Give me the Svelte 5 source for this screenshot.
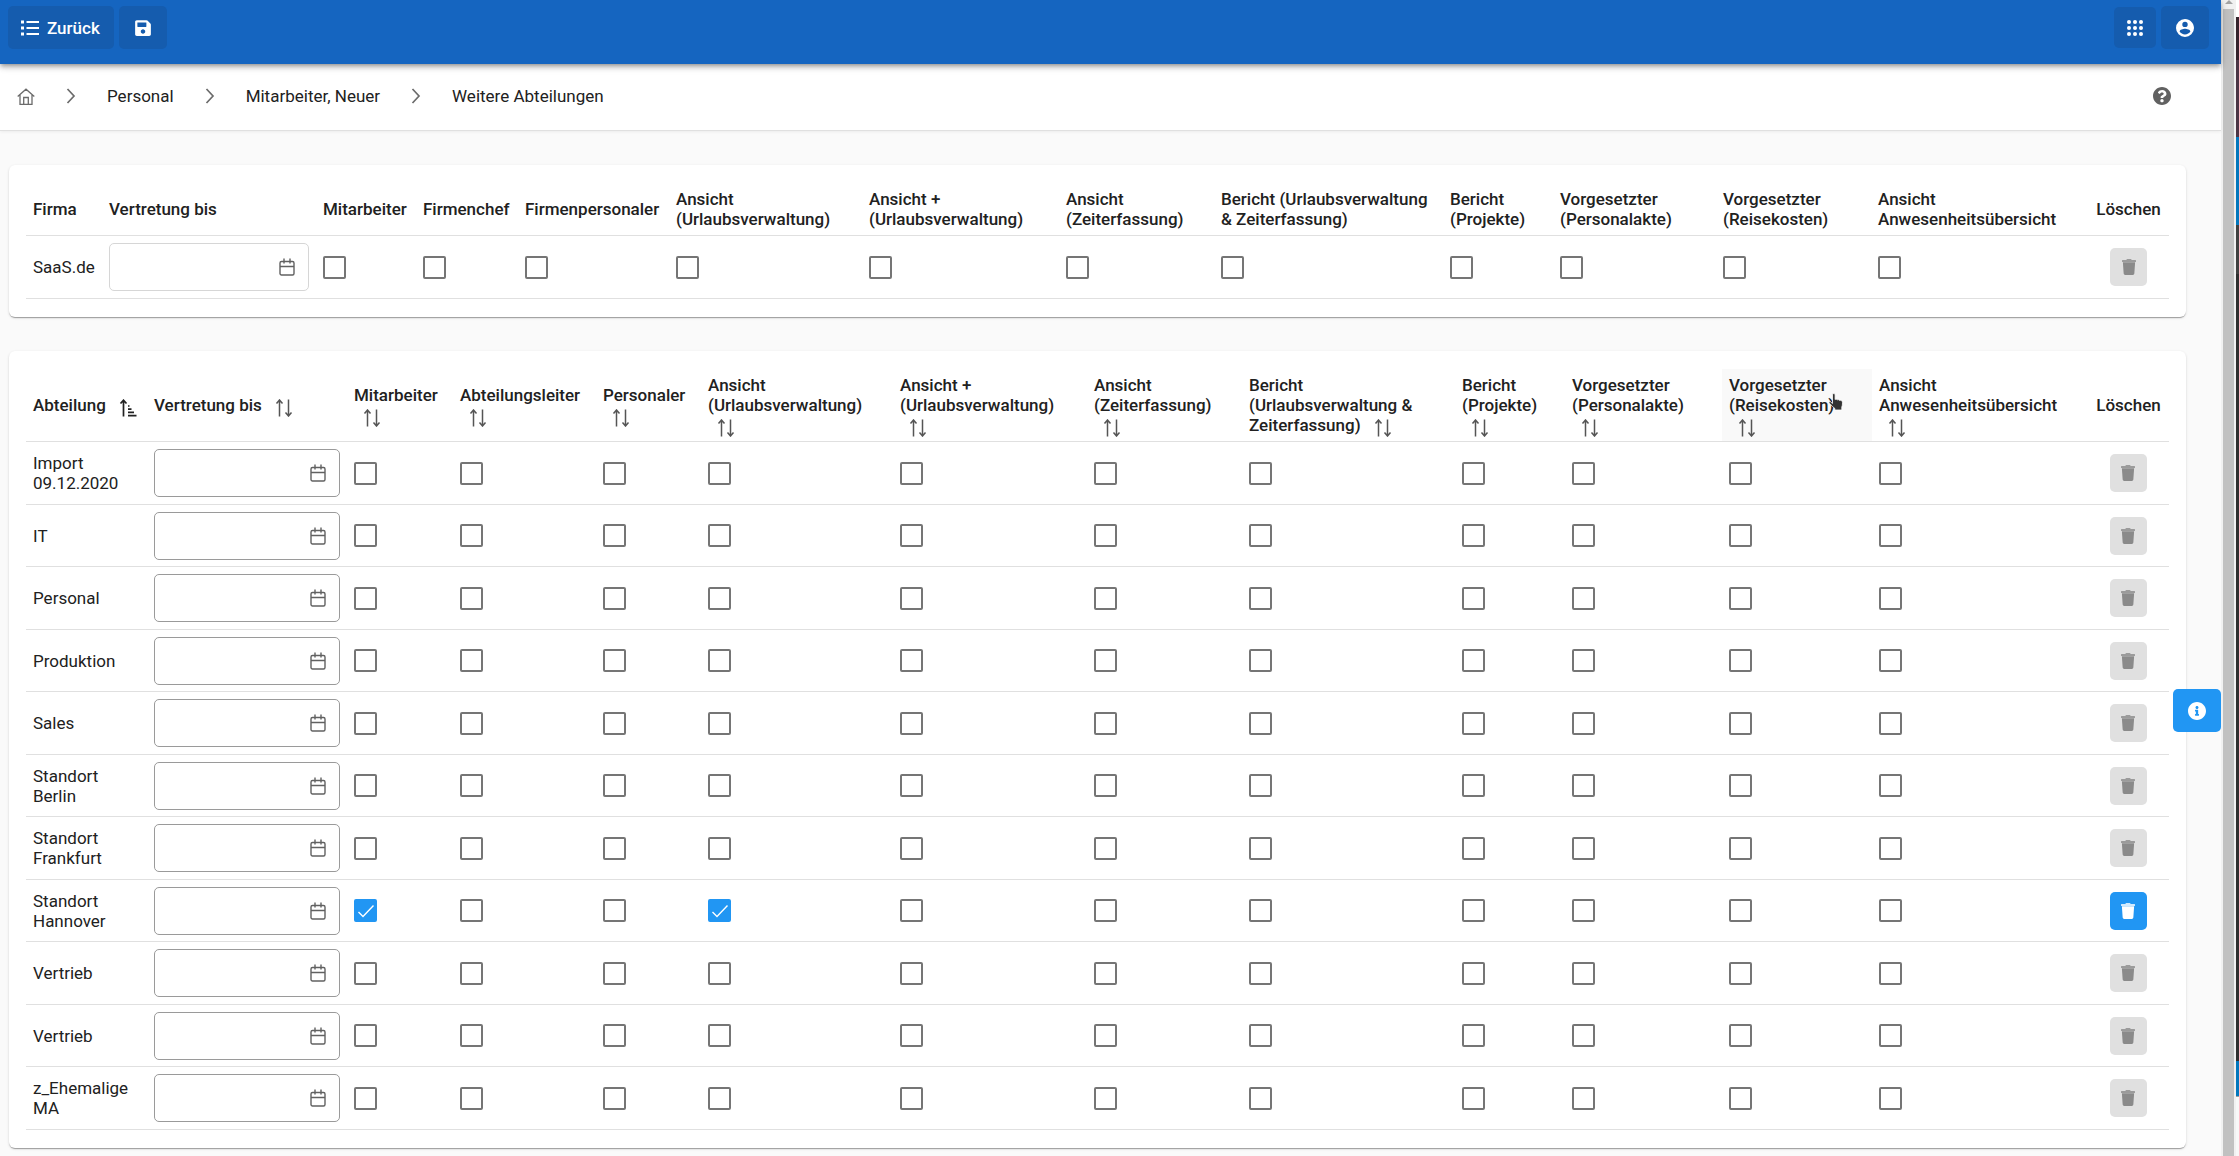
<script lang="ts">
	type Column = {
		label: string;
		width: number;
		kind: 'name' | 'date' | 'check' | 'delete';
		hovered?: boolean;
	};

	type Row = {
		name: string;
		checked: number[];
	};

	const companyColumns: Column[] = [
		{ label: 'Firma', width: 76, kind: 'name' },
		{ label: 'Vertretung bis', width: 214, kind: 'date' },
		{ label: 'Mitarbeiter', width: 100, kind: 'check' },
		{ label: 'Firmenchef', width: 102, kind: 'check' },
		{ label: 'Firmenpersonaler', width: 151, kind: 'check' },
		{ label: 'Ansicht (Urlaubsverwaltung)', width: 193, kind: 'check' },
		{ label: 'Ansicht + (Urlaubsverwaltung)', width: 197, kind: 'check' },
		{ label: 'Ansicht (Zeiterfassung)', width: 155, kind: 'check' },
		{ label: 'Bericht (Urlaubsverwaltung & Zeiterfassung)', width: 229, kind: 'check' },
		{ label: 'Bericht (Projekte)', width: 110, kind: 'check' },
		{ label: 'Vorgesetzter (Personalakte)', width: 163, kind: 'check' },
		{ label: 'Vorgesetzter (Reisekosten)', width: 155, kind: 'check' },
		{ label: 'Ansicht Anwesenheitsübersicht', width: 217, kind: 'check' },
		{ label: 'Löschen', width: 81, kind: 'delete' }
	];

	const departmentColumns: Column[] = [
		{ label: 'Abteilung', width: 121, kind: 'name' },
		{ label: 'Vertretung bis', width: 200, kind: 'date' },
		{ label: 'Mitarbeiter', width: 106, kind: 'check' },
		{ label: 'Abteilungsleiter', width: 143, kind: 'check' },
		{ label: 'Personaler', width: 105, kind: 'check' },
		{ label: 'Ansicht (Urlaubsverwaltung)', width: 192, kind: 'check' },
		{ label: 'Ansicht + (Urlaubsverwaltung)', width: 194, kind: 'check' },
		{ label: 'Ansicht (Zeiterfassung)', width: 155, kind: 'check' },
		{ label: 'Bericht (Urlaubsverwaltung & Zeiterfassung)', width: 213, kind: 'check' },
		{ label: 'Bericht (Projekte)', width: 110, kind: 'check' },
		{ label: 'Vorgesetzter (Personalakte)', width: 157, kind: 'check' },
		{ label: 'Vorgesetzter (Reisekosten)', width: 150, kind: 'check', hovered: true },
		{ label: 'Ansicht Anwesenheitsübersicht', width: 216, kind: 'check' },
		{ label: 'Löschen', width: 81, kind: 'delete' }
	];

	const companies: Row[] = [{ name: 'SaaS.de', checked: [] }];

	// checked holds the column indexes that are ticked
	const departments: Row[] = [
		{ name: 'Import 09.12.2020', checked: [] },
		{ name: 'IT', checked: [] },
		{ name: 'Personal', checked: [] },
		{ name: 'Produktion', checked: [] },
		{ name: 'Sales', checked: [] },
		{ name: 'Standort Berlin', checked: [] },
		{ name: 'Standort Frankfurt', checked: [] },
		{ name: 'Standort Hannover', checked: [2, 5] },
		{ name: 'Vertrieb', checked: [] },
		{ name: 'Vertrieb', checked: [] },
		{ name: 'z_Ehemalige MA', checked: [] }
	];

	const crumbs = ['Personal', 'Mitarbeiter, Neuer', 'Weitere Abteilungen'];

	function share(columns: Column[], width: number) {
		const total = columns.reduce((sum, c) => sum + c.width, 0);
		return (width / total) * 100;
	}
</script>

{#snippet sortIcon(active: boolean)}
	{#if active}
		<svg class="sort active" viewBox="0 0 18 18" aria-hidden="true">
			<path d="M4.500 17.500V1.500M1.500 4.500L4.500 1.200L7.500 4.500M9 7h1.500M9 10.200h3.500M9 13.400h6M9 16.600h8.500" />
		</svg>
	{:else}
		<svg class="sort" viewBox="0 0 18 18" aria-hidden="true">
			<path d="M4.500 17.500V1M1.500 4.500L4.500 1L7.500 4.500M13.500 .5v16.500M10.500 13.500l3 3.500l3-3.500" />
		</svg>
	{/if}
{/snippet}

{#snippet grid(columns: Column[], rows: Row[], sortable: boolean)}
	<table>
		<colgroup>
			{#each columns as column}
				<col style:width="{share(columns, column.width)}%" />
			{/each}
		</colgroup>
		<thead>
			<tr>
				{#each columns as column, i}
					<th class={column.kind} class:hovered={column.hovered} scope="col">
						{column.label}
						{#if sortable && column.kind !== 'delete'}
							{@render sortIcon(i === 0)}
						{/if}
						{#if column.hovered}
							<svg class="pointer" viewBox="0 0 16 18" aria-hidden="true">
								<path
									d="M4.500 10.500V1.800a1.300 1.300 0 0 1 2.600 0v4.700c.6-.5 1.800-.4 2.200.3.700-.4 1.800-.2 2.200.6.900-.4 2.200 0 2.700 1 .5.900.3 4.300-.4 5.600V17H6.800v-1.500C5.500 14.500 3.500 12.200 1.200 10.200c-.7-.8.300-2 1.300-1.500z"
								/>
							</svg>
						{/if}
					</th>
				{/each}
			</tr>
		</thead>
		<tbody>
			{#each rows as row}
				<tr>
					{#each columns as column, i}
						<td class={column.kind}>
							{#if column.kind === 'name'}
								{row.name}
							{:else if column.kind === 'date'}
								<div class="date-field" class:strong={sortable}>
									<input type="text" aria-label="{column.label} {row.name}" />
									<svg viewBox="0 0 16 18" aria-hidden="true">
										<rect x="1" y="3.500" width="14" height="13.500" rx="1.500" />
										<path d="M1 8.500h14M5 .5v5M11 .5v5" />
									</svg>
								</div>
							{:else if column.kind === 'check'}
								<input
									type="checkbox"
									aria-label="{column.label} {row.name}"
									checked={row.checked.includes(i)}
								/>
							{:else}
								<button
									class="trash"
									type="button"
									aria-label="{row.name} löschen"
									disabled={row.checked.length === 0}
								>
									<svg viewBox="0 0 448 512" aria-hidden="true">
										<path
											opacity="0.8"
											d="M432 32H312l-9.400-18.700A24 24 0 0 0 281.100 0H166.800a23.720 23.720 0 0 0-21.400 13.300L136 32H16A16 16 0 0 0 0 48v32a16 16 0 0 0 16 16h416a16 16 0 0 0 16-16V48a16 16 0 0 0-16-16z"
										/>
										<path d="M53.200 467a48 48 0 0 0 47.900 45h245.800a48 48 0 0 0 47.900-45L420 105H28z" />
									</svg>
								</button>
							{/if}
						</td>
					{/each}
				</tr>
			{/each}
		</tbody>
	</table>
{/snippet}

<div class="window">
	<div class="app">
		<header class="topbar">
			<button class="bar-button back" type="button">
				<svg viewBox="0 0 18 16" width="18" height="16" aria-hidden="true">
					<path
						d="M0 .5h3v3H0zM0 6.500h3v3H0zM0 12.500h3v3H0zM5.500 1h12.500v2H5.500zM5.500 7h12.500v2H5.500zM5.500 13h12.500v2H5.500z"
					/>
				</svg>
				Zurück
			</button>
			<button class="bar-button" type="button" aria-label="Speichern">
				<svg viewBox="0 0 448 512" width="16" height="18" aria-hidden="true">
					<path
						d="M433.941 129.941l-83.882-83.882A48 48 0 0 0 316.118 32H48C21.490 32 0 53.490 0 80v352c0 26.510 21.490 48 48 48h352c26.510 0 48-21.490 48-48V163.882a48 48 0 0 0-14.059-33.941zM224 416c-35.346 0-64-28.654-64-64 0-35.346 28.654-64 64-64s64 28.654 64 64c0 35.346-28.654 64-64 64zm96-304.520V212c0 6.627-5.373 12-12 12H76c-6.627 0-12-5.373-12-12V108c0-6.627 5.373-12 12-12h228.520c3.183 0 6.235 1.264 8.485 3.515l3.480 3.480A11.996 11.996 0 0 1 320 111.480z"
					/>
				</svg>
			</button>
			<div class="spacer"></div>
			<button class="bar-button small" type="button" aria-label="Apps">
				<svg viewBox="0 0 16 16" width="16" height="16" aria-hidden="true">
					{#each [2, 8, 14] as cy}
						{#each [2, 8, 14] as cx}
							<circle {cx} {cy} r="2" />
						{/each}
					{/each}
				</svg>
			</button>
			<button class="bar-button" type="button" aria-label="Benutzer">
				<svg viewBox="2 2 20 20" width="18" height="18" aria-hidden="true">
					<path
						d="M12,19.200C9.500,19.200 7.290,17.920 6,16C6.030,14 10,12.900 12,12.900C14,12.900 17.970,14 18,16C16.710,17.920 14.500,19.200 12,19.200M12,5A3,3 0 0,1 15,8A3,3 0 0,1 12,11A3,3 0 0,1 9,8A3,3 0 0,1 12,5M12,2A10,10 0 0,0 2,12A10,10 0 0,0 12,22A10,10 0 0,0 22,12C22,6.470 17.500,2 12,2Z"
					/>
				</svg>
			</button>
		</header>

		<nav class="breadcrumb" aria-label="Breadcrumb">
			<a href="#home" aria-label="Start">
				<svg class="home" viewBox="0 0 18 17" width="18" height="17" aria-hidden="true">
					<path d="M.7 8.500L9 1.200l8.300 7.300M3 7v9.300h12V7M6.700 16V9.500h4.600V16" />
				</svg>
			</a>
			{#each crumbs as crumb}
				<svg class="chevron" viewBox="0 0 10 16" width="10" height="16" aria-hidden="true">
					<path d="M1.500 1l6.500 7-6.500 7" />
				</svg>
				<a href="#{crumb}">{crumb}</a>
			{/each}
			<div class="spacer"></div>
			<button class="help" type="button" aria-label="Hilfe">
				<svg viewBox="8 8 496 496" width="18" height="18" aria-hidden="true">
					<path
						d="M504 256c0 136.997-111.043 248-248 248S8 392.997 8 256C8 119.083 119.043 8 256 8s248 111.083 248 248zM262.655 90c-54.497 0-89.255 22.957-116.549 63.758-3.536 5.286-2.353 12.415 2.715 16.258l34.699 26.310c5.205 3.947 12.621 3.008 16.665-2.122 17.864-22.658 30.113-35.797 57.303-35.797 20.429 0 45.698 13.148 45.698 32.958 0 14.976-12.363 22.667-32.534 33.976C247.128 238.528 216 254.941 216 296v4c0 6.627 5.373 12 12 12h56c6.627 0 12-5.373 12-12v-1.333c0-28.462 83.186-29.647 83.186-106.667 0-58.002-60.165-102-116.531-102zM256 338c-25.365 0-46 20.635-46 46 0 25.364 20.635 46 46 46s46-20.636 46-46c0-25.365-20.635-46-46-46z"
					/>
				</svg>
			</button>
		</nav>

		<main>
			<section class="card">
				{@render grid(companyColumns, companies, false)}
			</section>
			<section class="card">
				{@render grid(departmentColumns, departments, true)}
			</section>
		</main>

		<button class="info" type="button" aria-label="Information">
			<svg viewBox="8 8 496 496" width="18" height="18" aria-hidden="true">
				<path
					d="M256 8C119.043 8 8 119.083 8 256c0 136.997 111.043 248 248 248s248-111.003 248-248C504 119.083 392.957 8 256 8zm0 110c23.196 0 42 18.804 42 42s-18.804 42-42 42-42-18.804-42-42 18.804-42 42-42zm56 254c0 6.627-5.373 12-12 12h-88c-6.627 0-12-5.373-12-12v-24c0-6.627 5.373-12 12-12h12v-64h-12c-6.627 0-12-5.373-12-12v-24c0-6.627 5.373-12 12-12h64c6.627 0 12 5.373 12 12v100h12c6.627 0 12 5.373 12 12v24z"
				/>
			</svg>
		</button>
	</div>

	<div class="scrollbar">
		<svg viewBox="0 0 8 4" width="8" height="4" aria-hidden="true">
			<path d="M0 4l4-4 4 4z" />
		</svg>
		<div class="thumb"></div>
	</div>
	<div class="desktop"></div>
</div>

<style>
	:global(body) {
		background: #fafafa;
	}

	.window {
		display: grid;
		grid-template-columns: minmax(0, 1fr) 15px 3px;
		min-height: 100vh;
		font-family: Roboto, sans-serif;
		font-size: 17px;
		line-height: 20px;
		color: #212121;
	}

	.app {
		position: relative;
		display: flex;
		flex-direction: column;
		background: #fafafa;
	}

	button,
	input {
		box-sizing: border-box;
		margin: 0;
		font: inherit;
	}

	button {
		padding: 0;
		border: none;
		cursor: pointer;
	}

	.spacer {
		flex: 1;
	}

	.topbar {
		position: relative;
		z-index: 3;
		display: flex;
		align-items: center;
		gap: 5px;
		padding: 6px 12px 15px 8px;
		background: #1565c0;
		box-shadow:
			0 2px 4px -1px rgba(0, 0, 0, 0.3),
			0 4px 5px rgba(0, 0, 0, 0.14),
			0 1px 10px rgba(0, 0, 0, 0.12);
	}

	.bar-button {
		display: flex;
		align-items: center;
		justify-content: center;
		gap: 8px;
		width: 48px;
		height: 43px;
		border-radius: 5px;
		background: #155cae;
		color: #fff;
		font-weight: 500;
	}

	.bar-button.back {
		width: auto;
		padding: 0 14px 0 13px;
	}

	.bar-button.small {
		width: 42px;
		height: 41px;
	}

	.bar-button svg,
	.help svg,
	.info svg,
	.trash svg {
		fill: currentColor;
	}

	.breadcrumb {
		box-sizing: border-box;
		display: flex;
		align-items: center;
		gap: 31px;
		height: 67px;
		padding: 0 50px 2px 17px;
		border-bottom: 1px solid #e0e0e0;
		background: #fff;
		box-shadow: 0 1px 3px rgba(0, 0, 0, 0.06);
	}

	.breadcrumb a {
		color: inherit;
		text-decoration: none;
	}

	.breadcrumb svg {
		display: block;
	}

	.home,
	.chevron {
		fill: none;
		stroke: #6b6b6b;
		stroke-width: 1.3;
	}

	.chevron {
		stroke-width: 1.7;
	}

	.help {
		background: none;
		color: #616161;
	}

	main {
		display: flex;
		flex-direction: column;
		gap: 34px;
		padding: 34px 35px 6px 9px;
	}

	.card {
		padding: 18px 17px;
		border-radius: 6px;
		background: #fff;
		box-shadow:
			0 2px 1px -1px rgba(0, 0, 0, 0.2),
			0 1px 1px rgba(0, 0, 0, 0.14),
			0 1px 3px rgba(0, 0, 0, 0.12);
	}

	table {
		width: 100%;
		table-layout: fixed;
		border-collapse: separate;
		border-spacing: 0;
	}

	th,
	td {
		position: relative;
		box-sizing: border-box;
		padding: 6px 7px;
		border-bottom: 1px solid #e0e0e0;
		text-align: left;
		vertical-align: middle;
	}

	th {
		font-weight: 500;
	}

	td {
		height: 63px;
	}

	tr:nth-child(even) td {
		height: 62px;
	}

	th.delete,
	td.delete {
		text-align: center;
	}

	th.hovered {
		background: #f9f9f9;
	}

	.sort {
		width: 18px;
		height: 18px;
		margin: -2px 0 -2px 9px;
		vertical-align: -4px;
		fill: none;
		stroke: #555;
		stroke-width: 1.5;
	}

	.sort.active {
		stroke: #212121;
		stroke-width: 1.7;
	}

	.pointer {
		position: absolute;
		top: 24px;
		left: 106px;
		width: 16px;
		height: 18px;
		fill: #333;
		stroke: #fff;
		stroke-width: 0.8;
	}

	.date-field {
		position: relative;
	}

	.date-field input {
		display: block;
		width: 100%;
		height: 48px;
		padding: 0 44px 0 12px;
		border: 1px solid #d6d6d6;
		border-radius: 5px;
		background: #fff;
	}

	.date-field.strong input {
		border-color: #9a9a9a;
	}

	.date-field svg {
		position: absolute;
		top: 15px;
		right: 14px;
		width: 16px;
		height: 18px;
		fill: none;
		stroke: #616161;
		stroke-width: 1.4;
	}

	input[type='checkbox'] {
		display: block;
		width: 23px;
		height: 23px;
		border: 2px solid #757575;
		border-radius: 2px;
		appearance: none;
		background: #fff;
	}

	input[type='checkbox']:checked {
		border-color: #2196f3;
		background: #2196f3
			url("data:image/svg+xml,%3Csvg xmlns='http://www.w3.org/2000/svg' viewBox='0 0 18 18'%3E%3Cpath d='M1.500 10l4.500 4.500L16.500 3.500' fill='none' stroke='white' stroke-width='1.400'/%3E%3C/svg%3E")
			center / 18px no-repeat;
	}

	.trash {
		display: inline-flex;
		align-items: center;
		justify-content: center;
		width: 37px;
		height: 38px;
		border-radius: 5px;
		background: #2196f3;
		color: #fff;
		vertical-align: middle;
	}

	.trash:disabled {
		background: #e0e0e0;
		color: #8a8a8a;
		cursor: default;
	}

	.trash svg {
		width: 14px;
		height: 16px;
	}

	.info {
		position: absolute;
		top: 689px;
		right: 0;
		display: flex;
		align-items: center;
		justify-content: center;
		width: 48px;
		height: 43px;
		border-radius: 5px;
		background: #2196f3;
		color: #fff;
	}

	.scrollbar {
		display: flex;
		flex-direction: column;
		align-items: center;
		gap: 5px;
		background: #f1f1f1;
		box-shadow: 0 0 8px rgba(0, 0, 0, 0.14);
	}

	.scrollbar svg {
		flex: none;
		fill: #a3a3a3;
	}

	.thumb {
		flex: 1;
		width: 11px;
		background: #c1c1c1;
	}

	.desktop {
		background: linear-gradient(
			#fff 17px,
			#35222b 17px 60px,
			#4b3545 60px 137px,
			#0277bd 137px 225px,
			#404040 225px 274px,
			#2f2f2f 274px 1061px,
			#0277bd 1061px 1096px,
			#9e9e9e 1096px 1097px,
			#f8f8f8 1097px
		);
	}
</style>
